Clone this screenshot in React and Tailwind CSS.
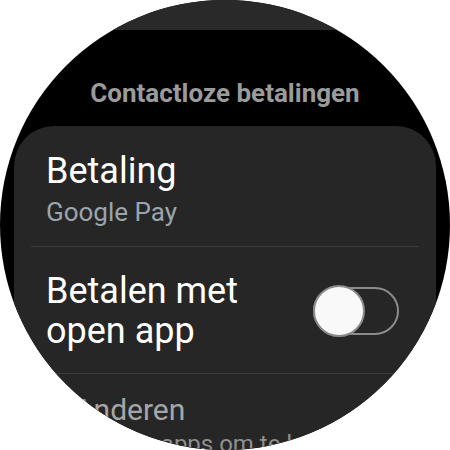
import React from 'react';

function Toggle() {
  return (
    <div className="relative w-[86px] h-[52px] shrink-0">
      <div className="absolute left-0 top-[2px] w-[86px] h-[48px] rounded-full border-2 border-[#8c8c8c]" />
      <div className="absolute left-0 top-0 w-[52px] h-[52px] rounded-full bg-[#f9f9f9] border-2 border-[#8a8a8a]" />
    </div>
  );
}

export default function App() {
  return (
    <div className="w-[450px] h-[450px] bg-white" style={{ fontFamily: 'Roboto, "Noto Sans", sans-serif' }}>
      <div className="w-[450px] h-[450px] rounded-full overflow-hidden bg-black flex flex-col">
        {/* top strip */}
        <div className="h-[30px] bg-[#292929] shrink-0" />

        {/* title */}
        <div className="pt-[48px] pb-[18px] text-center text-[26px] leading-[30px] font-bold text-[#9b9b9b]">
          Contactloze betalingen
        </div>

        {/* card */}
        <div className="mx-[14px] rounded-t-[40px] bg-[#262626] flex-1">
          <div className="px-[32px] pt-[25px] pb-[19px]">
            <div className="text-[36px] leading-[40px] text-white">Betaling</div>
            <div className="mt-[6px] text-[26px] leading-[30px] text-[#9aa5ae]">Google Pay</div>
          </div>
          <div className="mx-[17px] h-px bg-[#3b3b3b]" />

          <div className="flex items-center justify-between pl-[32px] pr-[37px] pt-[24px] pb-[22px]">
            <div className="text-[36px] leading-[40px] text-white">
              Betalen met<br />open app
            </div>
            <Toggle />
          </div>
          <div className="mx-[17px] h-px bg-[#3b3b3b]" />

          {/* item shrinks toward the round edge */}
          <div className="pl-[60px] pr-[32px] pt-[19px]">
            <div className="text-[30px] leading-[34px] text-[#a6a6a6]">Anderen</div>
            <div className="mt-[3px] text-[24px] leading-[28px] text-[#8f8f8f] whitespace-nowrap">
              Overige apps om te betalen
            </div>
          </div>
        </div>
      </div>
    </div>
  );
}
